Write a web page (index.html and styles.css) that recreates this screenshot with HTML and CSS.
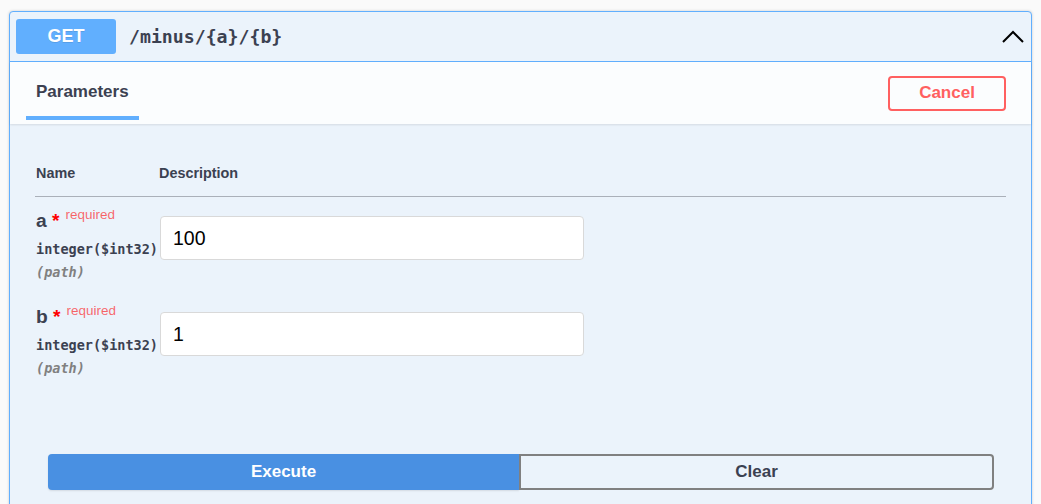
FILE: index.html
```html
<!DOCTYPE html>
<html lang="en">
<head>
<meta charset="utf-8">
<title>GET /minus/{a}/{b}</title>
<link rel="stylesheet" href="styles.css">
</head>
<body>
<div class="page">
  <div class="opblock">
    <div class="summary">
      <span class="method">GET</span>
      <span class="path">/minus/{a}/{b}</span>
      <svg class="chevron" width="22" height="13" viewBox="0 0 22 13" aria-hidden="true">
        <polyline points="1,12 11,2 21,12" fill="none" stroke="#000" stroke-width="2"/>
      </svg>
    </div>
    <div class="section-header">
      <div class="tab"><h4 class="tab-title">Parameters</h4></div>
      <button class="cancel">Cancel</button>
    </div>
    <div class="params">
      <div class="thead">
        <div class="th">Name</div>
        <div class="th">Description</div>
      </div>
      <div class="prow">
        <div class="name-cell">
          <div class="pname">a<span class="star">&nbsp;*</span><span class="req">required</span></div>
          <div class="ptype">integer($int32)</div>
          <div class="pin">(path)</div>
        </div>
        <div class="desc-cell"><input class="pinput" type="text" value="100"></div>
      </div>
      <div class="prow">
        <div class="name-cell">
          <div class="pname">b<span class="star">&nbsp;*</span><span class="req">required</span></div>
          <div class="ptype">integer($int32)</div>
          <div class="pin">(path)</div>
        </div>
        <div class="desc-cell"><input class="pinput" type="text" value="1"></div>
      </div>
    </div>
    <div class="execute-wrapper">
      <button class="btn execute">Execute</button>
      <button class="btn clear">Clear</button>
    </div>
  </div>
</div>
</body>
</html>
```

FILE: styles.css
```css
* { box-sizing: border-box; }

html, body {
  margin: 0;
  padding: 0;
  background: #fafafa;
  font-family: "Liberation Sans", Arial, sans-serif;
  color: #3b4151;
}

.page {
  padding: 11px 9px 0 9px;
}

.opblock {
  border: 1px solid #61affe;
  border-radius: 4px;
  background: #ebf3fb;
  box-shadow: 0 0 3px rgba(0, 0, 0, 0.19);
  height: 520px;
}

.summary {
  display: flex;
  align-items: center;
  height: 50px;
  padding: 0 7px 0 6px;
  border-bottom: 1px solid #61affe;
}

.method {
  width: 100px;
  height: 35px;
  line-height: 35px;
  background: #61affe;
  color: #fff;
  border-radius: 3px;
  text-align: center;
  font-weight: 700;
  font-size: 18px;
  text-shadow: 0 1px 0 rgba(0, 0, 0, 0.1);
}

.path {
  margin-left: 13px;
  font-family: "DejaVu Sans Mono", "Liberation Mono", monospace;
  font-weight: 700;
  font-size: 18.2px;
  color: #3b4151;
  flex: 1;
}

.chevron {
  display: block;
}

.section-header {
  display: flex;
  align-items: center;
  justify-content: space-between;
  height: 62px;
  padding: 0 25px 2px 16px;
  background: rgba(255, 255, 255, 0.8);
  box-shadow: 0 1px 2px rgba(0, 0, 0, 0.1);
}

.tab {
  align-self: flex-start;
  padding: 20px 10px 14px 10px;
  border-bottom: 4px solid #61affe;
}

.tab-title {
  margin: 0;
  font-size: 17px;
  line-height: 20px;
  font-weight: 700;
  color: #3b4151;
}

.cancel {
  width: 118px;
  height: 35px;
  border: 2px solid #ff6060;
  border-radius: 4px;
  background: transparent;
  color: #ff6060;
  font-family: "Liberation Sans", Arial, sans-serif;
  font-weight: 700;
  font-size: 17px;
  margin-top: 2px;
}

.params {
  padding: 40px 25px 0 26px;
}

.thead {
  display: grid;
  grid-template-columns: 123px 1fr;
  padding-bottom: 14px;
  border-bottom: 1px solid #aab0b9;
  margin-left: -1px;
  padding-left: 1px;
}

.th {
  font-size: 14.4px;
  line-height: 18px;
  font-weight: 700;
  color: #3b4151;
}

.prow {
  display: grid;
  grid-template-columns: 124px 1fr;
  padding: 13px 0 13px 0;
}

.pname {
  font-size: 19.2px;
  line-height: 22px;
  font-weight: 700;
  color: #3b4151;
  white-space: nowrap;
}

.star {
  color: red;
}

.req {
  position: relative;
  top: -8px;
  padding-left: 6px;
  font-size: 13.5px;
  font-weight: 400;
  color: rgba(255, 0, 0, 0.6);
}

.ptype {
  padding: 7px 0;
  font-family: "DejaVu Sans Mono", "Liberation Mono", monospace;
  font-weight: 700;
  font-size: 13.5px;
  line-height: 16px;
  color: #3b4151;
  white-space: nowrap;
}

.pin {
  font-family: "DejaVu Sans Mono", "Liberation Mono", monospace;
  font-style: italic;
  font-weight: 700;
  font-size: 13.5px;
  line-height: 16px;
  color: #808080;
}

.desc-cell {
  padding-top: 6px;
}

.pinput {
  display: block;
  width: 424px;
  height: 44px;
  padding: 0 12px;
  border: 1px solid #d9d9d9;
  border-radius: 4px;
  background: #fff;
  font-family: "Liberation Sans", Arial, sans-serif;
  font-size: 19.5px;
  color: #000;
  outline: none;
}

.execute-wrapper {
  display: flex;
  padding: 65px 37px 0 38px;
}

.btn {
  flex: 1;
  height: 36px;
  font-family: "Liberation Sans", Arial, sans-serif;
  font-weight: 700;
  font-size: 17px;
  cursor: pointer;
}

.execute {
  background: #4990e2;
  color: #fff;
  border: 0;
  border-radius: 4px 0 0 4px;
  box-shadow: 0 1px 2px rgba(0, 0, 0, 0.1);
}

.clear {
  background: transparent;
  color: #3b4151;
  border: 2px solid #808080;
  border-radius: 0 4px 4px 0;
}
```
